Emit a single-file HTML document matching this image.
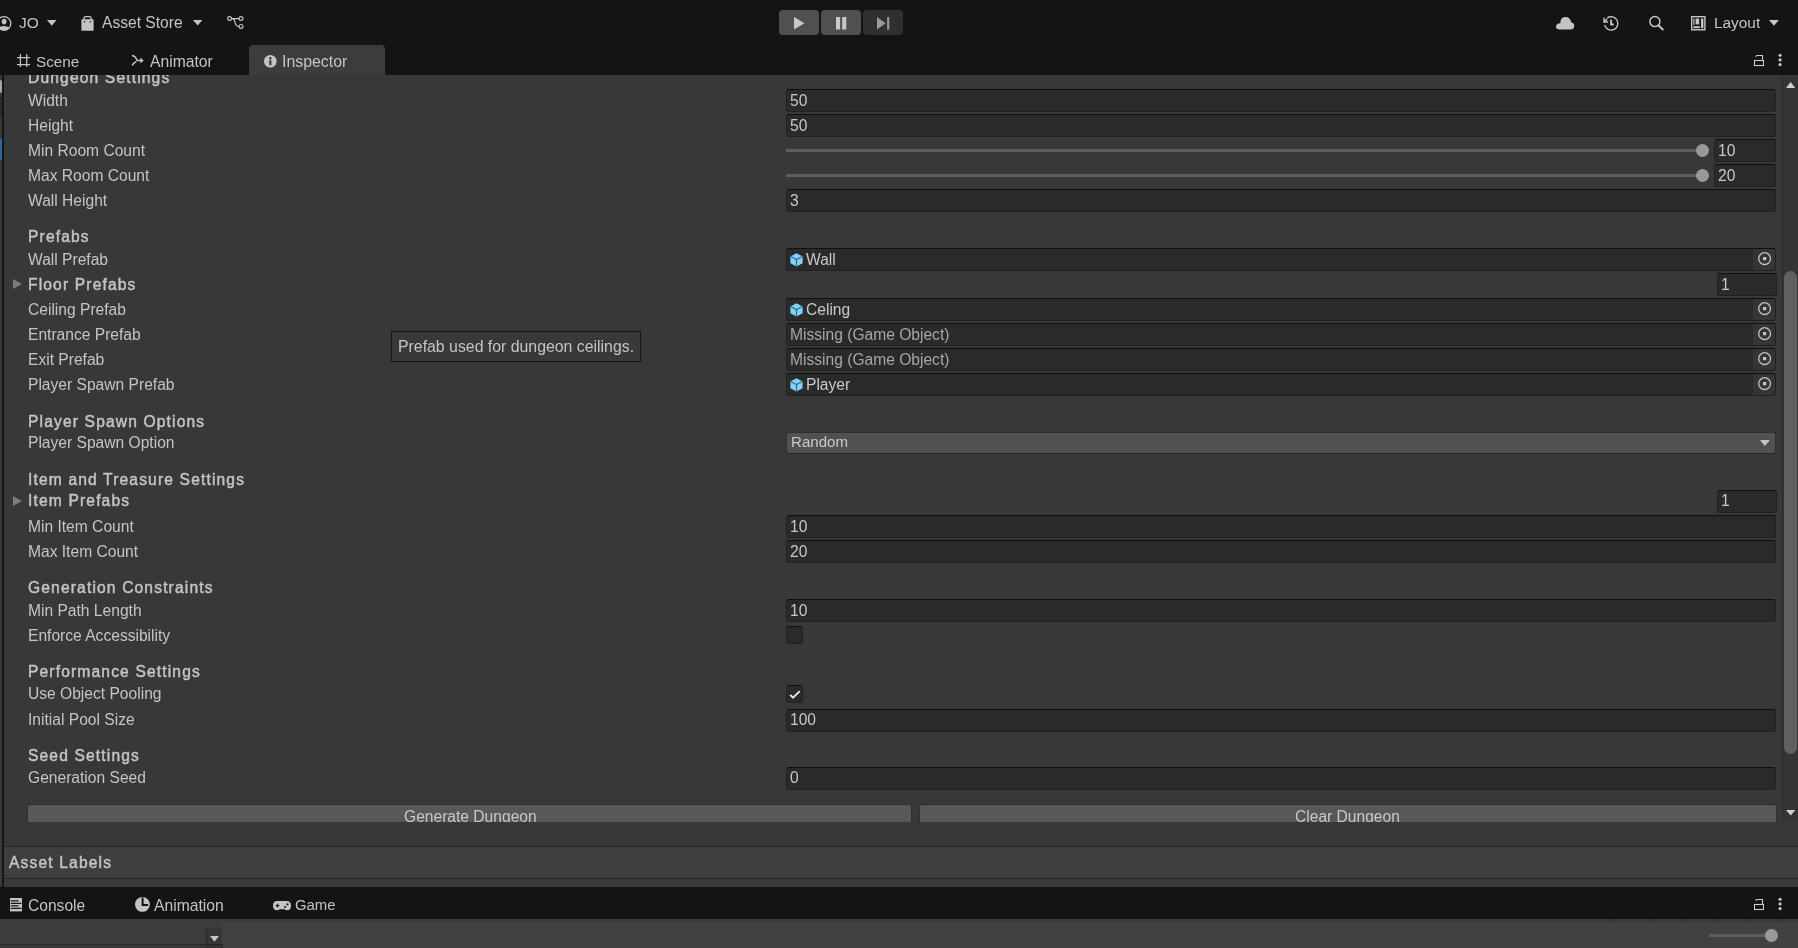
<!DOCTYPE html><html><head><meta charset="utf-8"><style>
*{margin:0;padding:0;box-sizing:border-box}
html,body{width:1798px;height:948px;overflow:hidden;background:#383838}
body{position:relative;font-family:"Liberation Sans",sans-serif}
.t{position:absolute;white-space:nowrap;will-change:transform}
.b{position:absolute}
svg{position:absolute;overflow:visible}
.fld{position:absolute;background:#2a2a2a;border:1px solid #212121;border-top-color:#0f0f0f;border-radius:3px}
</style></head><body><div class="b" style="left:0px;top:0px;width:1798px;height:75px;background:#141414"></div>
<div class="b" style="left:0px;top:75px;width:2px;height:812px;background:#393939"></div>
<div class="b" style="left:0px;top:80.3px;width:2px;height:12.7px;background:#a6a6a6;border-radius:0 2px 2px 0"></div>
<div class="b" style="left:0px;top:97px;width:2px;height:2px;background:#1e1e1e"></div>
<div class="b" style="left:0px;top:99px;width:2px;height:18.6px;background:#2a2a2a"></div>
<div class="b" style="left:0px;top:138.7px;width:2px;height:21.8px;background:#2f6699"></div>
<div class="b" style="left:2px;top:75px;width:2px;height:812px;background:#161616"></div>
<div class="b" style="left:4px;top:75px;width:1794px;height:772px;background:#383838"></div>
<svg style="left:-4px;top:15.5px" width="15" height="15" viewBox="0 0 15 15"><circle cx="8" cy="7.4" r="6.8" fill="none" stroke="#c4c4c4" stroke-width="1.3"/><ellipse cx="8.1" cy="5.6" rx="2.4" ry="2.8" fill="#c4c4c4"/><path d="M2.4 11.6Q8 8.6 13.6 11.6A6.8 6.8 0 0 1 2.4 11.6Z" fill="#c4c4c4"/></svg>
<div class="t" style="left:19.3px;top:14.88px;font-size:15.5px;line-height:15.5px;color:#c4c4c4;">JO</div>
<svg style="left:46.5px;top:19.5px" width="10" height="6" viewBox="0 0 10 6"><path d="M0 0H9.5L4.75 5.8Z" fill="#c4c4c4"/></svg>
<svg style="left:80.5px;top:15.5px" width="13" height="15" viewBox="0 0 13 15"><rect x="0.4" y="3.3" width="12.2" height="11.5" rx="0.6" fill="#c4c4c4"/><path d="M3.1 3.6V2.1Q3.1 0.6 4.6 0.6H8.5Q10 0.6 10 2.1V3.6" fill="none" stroke="#c4c4c4" stroke-width="1.4"/><circle cx="3.7" cy="5.7" r="0.75" fill="#141414"/><circle cx="9.3" cy="5.7" r="0.75" fill="#141414"/></svg>
<div class="t" style="left:102.3px;top:14.79px;font-size:15.6px;line-height:15.6px;color:#c4c4c4;">Asset Store</div>
<svg style="left:192.8px;top:19.7px" width="10" height="6" viewBox="0 0 10 6"><path d="M0 0H9.4L4.7 5.6Z" fill="#c4c4c4"/></svg>
<svg style="left:227px;top:15.5px" width="17" height="14" viewBox="0 0 17 14"><circle cx="2.6" cy="2.6" r="1.9" fill="none" stroke="#c4c4c4" stroke-width="1.2"/><circle cx="14" cy="2.6" r="1.9" fill="none" stroke="#c4c4c4" stroke-width="1.2"/><circle cx="14" cy="10.4" r="1.9" fill="none" stroke="#c4c4c4" stroke-width="1.2"/><path d="M4.5 2.6H12.1M4.5 2.6Q7.5 2.6 8 6 Q8.5 10.4 12.1 10.4" fill="none" stroke="#c4c4c4" stroke-width="1.2"/></svg>
<div class="b" style="left:779px;top:10px;width:40px;height:25px;background:#505050;border-radius:4px"></div>
<div class="b" style="left:821px;top:10px;width:40px;height:25px;background:#505050;border-radius:4px"></div>
<div class="b" style="left:863px;top:10px;width:40px;height:25px;background:#303030;border-radius:4px"></div>
<svg style="left:793.8px;top:16.7px" width="11" height="13" viewBox="0 0 11 13"><path d="M0 0L10.5 6.3L0 12.6Z" fill="#c8c8c8"/></svg>
<svg style="left:835.8px;top:16.7px" width="11" height="13" viewBox="0 0 11 13"><rect x="0" y="0" width="4.1" height="12.6" rx="0.6" fill="#c8c8c8"/><rect x="6.2" y="0" width="4.1" height="12.6" rx="0.6" fill="#c8c8c8"/></svg>
<svg style="left:876.7px;top:16.7px" width="13" height="13" viewBox="0 0 13 13"><path d="M0 0L8.7 6.3L0 12.6Z" fill="#9a9a9a"/><rect x="10.1" y="0" width="2.2" height="12.6" fill="#9a9a9a"/></svg>
<svg style="left:1555.8px;top:16.7px" width="19" height="13" viewBox="0 0 19 13"><path d="M3.6 12.4H14.6Q18.2 12.4 18.2 9Q18.2 5.8 15.2 5.6Q14.4 0 9.4 0Q5.4 0 4.4 4.4Q4.6 5.6 4.2 6.2Q0 6.6 0 9.4Q0 12.4 3.6 12.4Z" fill="#c4c4c4"/></svg>
<svg style="left:1603px;top:15.5px" width="17" height="16" viewBox="0 0 17 16"><path d="M4.26 1.91A6.7 6.7 0 1 1 1.63 9.13" fill="none" stroke="#c4c4c4" stroke-width="1.4"/><path d="M1 1.6V6H5.1M1 6L4.3 2.7" fill="none" stroke="#c4c4c4" stroke-width="1.4"/><path d="M8.1 3.8V8.5H10.7" fill="none" stroke="#c4c4c4" stroke-width="1.9"/></svg>
<svg style="left:1649.3px;top:15.8px" width="16" height="15" viewBox="0 0 16 15"><circle cx="5.9" cy="5.6" r="5" fill="none" stroke="#c4c4c4" stroke-width="1.5"/><path d="M9.4 9.3L14.3 14" stroke="#c4c4c4" stroke-width="1.9"/></svg>
<svg style="left:1690.6px;top:15.8px" width="15" height="15" viewBox="0 0 15 15"><rect x="0.7" y="0.7" width="13.2" height="13.1" fill="none" stroke="#c4c4c4" stroke-width="1.4"/><rect x="2.3" y="2.6" width="1.2" height="6.3" fill="#c4c4c4"/><rect x="4.6" y="2.6" width="3.6" height="5.8" fill="#c4c4c4"/><rect x="10" y="2.6" width="2.4" height="9.6" fill="#c4c4c4"/><rect x="2.3" y="10.2" width="6.6" height="2" fill="#c4c4c4"/></svg>
<div class="t" style="left:1714px;top:14.76px;font-size:15.4px;line-height:15.4px;color:#c4c4c4;">Layout</div>
<svg style="left:1768.7px;top:20px" width="10" height="6" viewBox="0 0 10 6"><path d="M0 0H9.9L4.95 5.8Z" fill="#c4c4c4"/></svg>
<div class="b" style="left:249px;top:45px;width:136px;height:30px;background:#3c3c3c;border-radius:4px 4px 0 0"></div>
<svg style="left:17px;top:53.8px" width="13" height="13" viewBox="0 0 13 13"><path d="M3.4 0V13M9.7 0V13M0 3.5H13M0 10.5H13" stroke="#c4c4c4" stroke-width="1.25"/></svg>
<div class="t" style="left:36.3px;top:54.05px;font-size:15.3px;line-height:15.3px;color:#c4c4c4;">Scene</div>
<svg style="left:131.4px;top:55px" width="14" height="12" viewBox="0 0 14 12"><path d="M1 0.6Q4.6 1 6 5.5H10M1.2 10.6Q2.2 8 5.2 6.6" fill="none" stroke="#c4c4c4" stroke-width="1.5"/><path d="M9.4 2.4L12.6 5.5L9.4 8.6Z" fill="#c4c4c4"/></svg>
<div class="t" style="left:149.6px;top:53.71px;font-size:15.7px;line-height:15.7px;color:#c4c4c4;">Animator</div>
<svg style="left:263.5px;top:54.6px" width="13" height="13" viewBox="0 0 13 13"><circle cx="6.3" cy="6.3" r="6.3" fill="#c4c4c4"/><rect x="5.2" y="5.2" width="2.2" height="5" fill="#3c3c3c"/><circle cx="6.3" cy="3.2" r="1.2" fill="#3c3c3c"/></svg>
<div class="t" style="left:282.3px;top:53.54px;font-size:15.9px;line-height:15.9px;color:#c4c4c4;">Inspector</div>
<svg style="left:1754px;top:54px" width="11" height="13" viewBox="0 0 11 13"><rect x="0.5" y="6.5" width="9" height="5" fill="none" stroke="#cacaca" stroke-width="1.1"/><path d="M1.6 2.6L2.7 1.5H8.5V6" fill="none" stroke="#cacaca" stroke-width="1.1"/></svg>
<svg style="left:1777.8px;top:54px" width="5" height="13" viewBox="0 0 5 13"><circle cx="2.1" cy="1.3" r="1.55" fill="#cacaca"/><circle cx="2.1" cy="5.9" r="1.55" fill="#cacaca"/><circle cx="2.1" cy="10.6" r="1.55" fill="#cacaca"/></svg>
<div class="b" style="left:0;top:75px;width:1782px;height:747px;overflow:hidden"><div class="b" style="left:0;top:-75px;width:1798px;height:948px">
<div class="t" style="left:28.3px;top:70.29px;font-size:15.6px;line-height:15.6px;color:#c4c4c4;letter-spacing:1.15px;-webkit-text-stroke:0.45px #c4c4c4;">Dungeon Settings</div>
<div class="t" style="left:28.3px;top:92.79px;font-size:15.6px;line-height:15.6px;color:#c4c4c4;">Width</div>
<div class="fld" style="left:786px;top:89px;width:990px;height:23px"></div>
<div class="t" style="left:790.0px;top:92.79px;font-size:15.6px;line-height:15.6px;color:#c8c8c8;">50</div>
<div class="t" style="left:28.3px;top:117.79px;font-size:15.6px;line-height:15.6px;color:#c4c4c4;">Height</div>
<div class="fld" style="left:786px;top:114px;width:990px;height:23px"></div>
<div class="t" style="left:790.0px;top:117.79px;font-size:15.6px;line-height:15.6px;color:#c8c8c8;">50</div>
<div class="t" style="left:28.3px;top:142.79px;font-size:15.6px;line-height:15.6px;color:#c4c4c4;">Min Room Count</div>
<div class="b" style="left:786px;top:149px;width:916px;height:3px;background:#5e5e5e"></div>
<div class="b" style="left:1695.6px;top:143.6px;width:13.2px;height:13.2px;background:#999999;border-radius:50%"></div>
<div class="fld" style="left:1714px;top:139px;width:62px;height:23px"></div>
<div class="t" style="left:1717.6px;top:142.79px;font-size:15.6px;line-height:15.6px;color:#c8c8c8;">10</div>
<div class="t" style="left:28.3px;top:167.79px;font-size:15.6px;line-height:15.6px;color:#c4c4c4;">Max Room Count</div>
<div class="b" style="left:786px;top:174px;width:916px;height:3px;background:#5e5e5e"></div>
<div class="b" style="left:1695.6px;top:168.6px;width:13.2px;height:13.2px;background:#999999;border-radius:50%"></div>
<div class="fld" style="left:1714px;top:164px;width:62px;height:23px"></div>
<div class="t" style="left:1717.6px;top:167.79px;font-size:15.6px;line-height:15.6px;color:#c8c8c8;">20</div>
<div class="t" style="left:28.3px;top:192.79px;font-size:15.6px;line-height:15.6px;color:#c4c4c4;">Wall Height</div>
<div class="fld" style="left:786px;top:189px;width:990px;height:23px"></div>
<div class="t" style="left:790.0px;top:192.79px;font-size:15.6px;line-height:15.6px;color:#c8c8c8;">3</div>
<div class="t" style="left:28.3px;top:228.79px;font-size:15.6px;line-height:15.6px;color:#c4c4c4;letter-spacing:1.15px;-webkit-text-stroke:0.45px #c4c4c4;">Prefabs</div>
<div class="t" style="left:28.3px;top:251.79px;font-size:15.6px;line-height:15.6px;color:#c4c4c4;">Wall Prefab</div>
<div class="fld" style="left:786px;top:248px;width:990px;height:23px"></div>
<div class="b" style="left:1753px;top:249px;width:22px;height:21px;background:#353535;border-radius:0 2px 2px 0"></div>
<svg style="left:1757.9px;top:251.7px" width="14" height="14" viewBox="0 0 14 14"><circle cx="6.6" cy="6.6" r="5.9" fill="none" stroke="#c4c4c4" stroke-width="1.3"/><rect x="5" y="5" width="3.2" height="3.2" fill="#c4c4c4"/></svg>
<svg style="left:790.3px;top:252.7px" width="13" height="14" viewBox="0 0 13 14"><path d="M6.5 0.2L12.6 3.4V10.2L6.5 13.4L0.4 10.2V3.4Z" fill="#7fd4fb"/><path d="M0.6 3.5L6.5 6.6L12.4 3.5M6.5 6.6V13.3" fill="none" stroke="#3a6b86" stroke-width="1.3"/></svg>
<div class="t" style="left:806px;top:251.79px;font-size:15.6px;line-height:15.6px;color:#c8c8c8;">Wall</div>
<svg style="left:13px;top:279px" width="10" height="10" viewBox="0 0 10 10"><path d="M0 0L9 5L0 10Z" fill="#7d7d7d"/></svg>
<div class="t" style="left:28.3px;top:276.79px;font-size:15.6px;line-height:15.6px;color:#c4c4c4;letter-spacing:1.15px;-webkit-text-stroke:0.45px #c4c4c4;">Floor Prefabs</div>
<div class="fld" style="left:1717px;top:273px;width:60px;height:23px"></div>
<div class="t" style="left:1721px;top:276.79px;font-size:15.6px;line-height:15.6px;color:#c8c8c8;">1</div>
<div class="t" style="left:28.3px;top:301.79px;font-size:15.6px;line-height:15.6px;color:#c4c4c4;">Ceiling Prefab</div>
<div class="fld" style="left:786px;top:298px;width:990px;height:23px"></div>
<div class="b" style="left:1753px;top:299px;width:22px;height:21px;background:#353535;border-radius:0 2px 2px 0"></div>
<svg style="left:1757.9px;top:301.7px" width="14" height="14" viewBox="0 0 14 14"><circle cx="6.6" cy="6.6" r="5.9" fill="none" stroke="#c4c4c4" stroke-width="1.3"/><rect x="5" y="5" width="3.2" height="3.2" fill="#c4c4c4"/></svg>
<svg style="left:790.3px;top:302.7px" width="13" height="14" viewBox="0 0 13 14"><path d="M6.5 0.2L12.6 3.4V10.2L6.5 13.4L0.4 10.2V3.4Z" fill="#7fd4fb"/><path d="M0.6 3.5L6.5 6.6L12.4 3.5M6.5 6.6V13.3" fill="none" stroke="#3a6b86" stroke-width="1.3"/></svg>
<div class="t" style="left:806px;top:301.79px;font-size:15.6px;line-height:15.6px;color:#c8c8c8;">Celing</div>
<div class="t" style="left:28.3px;top:326.79px;font-size:15.6px;line-height:15.6px;color:#c4c4c4;">Entrance Prefab</div>
<div class="fld" style="left:786px;top:323px;width:990px;height:23px"></div>
<div class="b" style="left:1753px;top:324px;width:22px;height:21px;background:#353535;border-radius:0 2px 2px 0"></div>
<svg style="left:1757.9px;top:326.7px" width="14" height="14" viewBox="0 0 14 14"><circle cx="6.6" cy="6.6" r="5.9" fill="none" stroke="#c4c4c4" stroke-width="1.3"/><rect x="5" y="5" width="3.2" height="3.2" fill="#c4c4c4"/></svg>
<div class="t" style="left:790.2px;top:326.79px;font-size:15.6px;line-height:15.6px;color:#a6a6a6;">Missing (Game Object)</div>
<div class="t" style="left:28.3px;top:351.79px;font-size:15.6px;line-height:15.6px;color:#c4c4c4;">Exit Prefab</div>
<div class="fld" style="left:786px;top:348px;width:990px;height:23px"></div>
<div class="b" style="left:1753px;top:349px;width:22px;height:21px;background:#353535;border-radius:0 2px 2px 0"></div>
<svg style="left:1757.9px;top:351.7px" width="14" height="14" viewBox="0 0 14 14"><circle cx="6.6" cy="6.6" r="5.9" fill="none" stroke="#c4c4c4" stroke-width="1.3"/><rect x="5" y="5" width="3.2" height="3.2" fill="#c4c4c4"/></svg>
<div class="t" style="left:790.2px;top:351.79px;font-size:15.6px;line-height:15.6px;color:#a6a6a6;">Missing (Game Object)</div>
<div class="t" style="left:28.3px;top:376.79px;font-size:15.6px;line-height:15.6px;color:#c4c4c4;">Player Spawn Prefab</div>
<div class="fld" style="left:786px;top:373px;width:990px;height:23px"></div>
<div class="b" style="left:1753px;top:374px;width:22px;height:21px;background:#353535;border-radius:0 2px 2px 0"></div>
<svg style="left:1757.9px;top:376.7px" width="14" height="14" viewBox="0 0 14 14"><circle cx="6.6" cy="6.6" r="5.9" fill="none" stroke="#c4c4c4" stroke-width="1.3"/><rect x="5" y="5" width="3.2" height="3.2" fill="#c4c4c4"/></svg>
<svg style="left:790.3px;top:377.7px" width="13" height="14" viewBox="0 0 13 14"><path d="M6.5 0.2L12.6 3.4V10.2L6.5 13.4L0.4 10.2V3.4Z" fill="#7fd4fb"/><path d="M0.6 3.5L6.5 6.6L12.4 3.5M6.5 6.6V13.3" fill="none" stroke="#3a6b86" stroke-width="1.3"/></svg>
<div class="t" style="left:806px;top:376.79px;font-size:15.6px;line-height:15.6px;color:#c8c8c8;">Player</div>
<div class="t" style="left:28.3px;top:413.79px;font-size:15.6px;line-height:15.6px;color:#c4c4c4;letter-spacing:1.15px;-webkit-text-stroke:0.45px #c4c4c4;">Player Spawn Options</div>
<div class="t" style="left:28.3px;top:434.79px;font-size:15.6px;line-height:15.6px;color:#c4c4c4;">Player Spawn Option</div>
<div class="b" style="left:786px;top:431.5px;width:990px;height:22.5px;background:#515151;border-radius:3px;border:1px solid #303030;border-bottom-color:#262626"></div>
<div class="t" style="left:791.4px;top:434.42px;font-size:15.1px;line-height:15.1px;color:#c8c8c8;">Random</div>
<svg style="left:1759.5px;top:439.8px" width="10" height="6" viewBox="0 0 10 6"><path d="M0 0H9.8L4.9 5.9Z" fill="#c4c4c4"/></svg>
<div class="t" style="left:28.3px;top:472.09px;font-size:15.6px;line-height:15.6px;color:#c4c4c4;letter-spacing:1.15px;-webkit-text-stroke:0.45px #c4c4c4;">Item and Treasure Settings</div>
<svg style="left:13px;top:495.6px" width="10" height="10" viewBox="0 0 10 10"><path d="M0 0L9 5L0 10Z" fill="#7d7d7d"/></svg>
<div class="t" style="left:28.3px;top:493.39px;font-size:15.6px;line-height:15.6px;color:#c4c4c4;letter-spacing:1.15px;-webkit-text-stroke:0.45px #c4c4c4;">Item Prefabs</div>
<div class="fld" style="left:1717px;top:490px;width:60px;height:23px"></div>
<div class="t" style="left:1721px;top:493.39px;font-size:15.6px;line-height:15.6px;color:#c8c8c8;">1</div>
<div class="t" style="left:28.3px;top:518.79px;font-size:15.6px;line-height:15.6px;color:#c4c4c4;">Min Item Count</div>
<div class="fld" style="left:786px;top:515px;width:990px;height:23px"></div>
<div class="t" style="left:790px;top:518.79px;font-size:15.6px;line-height:15.6px;color:#c8c8c8;">10</div>
<div class="t" style="left:28.3px;top:543.79px;font-size:15.6px;line-height:15.6px;color:#c4c4c4;">Max Item Count</div>
<div class="fld" style="left:786px;top:540px;width:990px;height:23px"></div>
<div class="t" style="left:790px;top:543.79px;font-size:15.6px;line-height:15.6px;color:#c8c8c8;">20</div>
<div class="t" style="left:28.3px;top:579.89px;font-size:15.6px;line-height:15.6px;color:#c4c4c4;letter-spacing:1.15px;-webkit-text-stroke:0.45px #c4c4c4;">Generation Constraints</div>
<div class="t" style="left:28.3px;top:602.79px;font-size:15.6px;line-height:15.6px;color:#c4c4c4;">Min Path Length</div>
<div class="fld" style="left:786px;top:599px;width:990px;height:23px"></div>
<div class="t" style="left:790px;top:602.79px;font-size:15.6px;line-height:15.6px;color:#c8c8c8;">10</div>
<div class="t" style="left:28.3px;top:627.79px;font-size:15.6px;line-height:15.6px;color:#c4c4c4;">Enforce Accessibility</div>
<div class="fld" style="left:786px;top:626px;width:17px;height:17.5px"></div>
<div class="t" style="left:28.3px;top:664.09px;font-size:15.6px;line-height:15.6px;color:#c4c4c4;letter-spacing:1.15px;-webkit-text-stroke:0.45px #c4c4c4;">Performance Settings</div>
<div class="t" style="left:28.3px;top:686.29px;font-size:15.6px;line-height:15.6px;color:#c4c4c4;">Use Object Pooling</div>
<div class="fld" style="left:786px;top:685px;width:17px;height:17.5px"></div>
<svg style="left:788.5px;top:690px" width="12" height="10" viewBox="0 0 12 10"><path d="M1.2 4.9L4 7.7L10.8 1.1" fill="none" stroke="#e6e6e6" stroke-width="2"/></svg>
<div class="t" style="left:28.3px;top:711.59px;font-size:15.6px;line-height:15.6px;color:#c4c4c4;">Initial Pool Size</div>
<div class="fld" style="left:786px;top:709px;width:990px;height:22.5px"></div>
<div class="t" style="left:790px;top:711.79px;font-size:15.6px;line-height:15.6px;color:#c8c8c8;">100</div>
<div class="t" style="left:28.3px;top:747.79px;font-size:15.6px;line-height:15.6px;color:#c4c4c4;letter-spacing:1.15px;-webkit-text-stroke:0.45px #c4c4c4;">Seed Settings</div>
<div class="t" style="left:28.3px;top:769.79px;font-size:15.6px;line-height:15.6px;color:#c4c4c4;">Generation Seed</div>
<div class="fld" style="left:786px;top:767px;width:990px;height:22.5px"></div>
<div class="t" style="left:790px;top:770.29px;font-size:15.6px;line-height:15.6px;color:#c8c8c8;">0</div>
<div class="b" style="left:27px;top:804px;width:885px;height:23px;background:#585858;border:1px solid #303030;border-radius:3px"></div>
<div class="b" style="left:919px;top:804px;width:858px;height:23px;background:#585858;border:1px solid #303030;border-radius:3px"></div>
<div class="t" style="left:403.5px;top:808.79px;font-size:15.6px;line-height:15.6px;color:#c8c8c8;">Generate Dungeon</div>
<div class="t" style="left:1295px;top:808.79px;font-size:15.6px;line-height:15.6px;color:#c8c8c8;">Clear Dungeon</div>
</div></div>
<div class="b" style="left:391px;top:331px;width:250px;height:31px;background:#393939;border:1px solid #161616"></div>
<div class="t" style="left:397.6px;top:338.58px;font-size:15.85px;line-height:15.85px;color:#c4c4c4;">Prefab used for dungeon ceilings.</div>
<div class="b" style="left:1782px;top:75px;width:1px;height:747px;background:#2c2c2c"></div>
<div class="b" style="left:1783px;top:75px;width:15px;height:747px;background:#343434"></div>
<svg style="left:1786px;top:81.8px" width="10" height="6" viewBox="0 0 10 6"><path d="M4.6 0L9.2 5.9H0Z" fill="#d0d0d0"/></svg>
<div class="b" style="left:1784px;top:271px;width:13px;height:483px;background:#606060;border-radius:6.5px"></div>
<svg style="left:1786px;top:809.7px" width="10" height="6" viewBox="0 0 10 6"><path d="M0 0H9.4L4.7 5.5Z" fill="#d0d0d0"/></svg>
<div class="b" style="left:4px;top:846px;width:1794px;height:1px;background:#232323"></div>
<div class="b" style="left:4px;top:847px;width:1794px;height:31px;background:#3e3e3e"></div>
<div class="t" style="left:8.6px;top:854.79px;font-size:15.6px;line-height:15.6px;color:#c4c4c4;letter-spacing:1.15px;-webkit-text-stroke:0.45px #c4c4c4;">Asset Labels</div>
<div class="b" style="left:4px;top:878px;width:1794px;height:1px;background:#232323"></div>
<div class="b" style="left:4px;top:879px;width:1794px;height:8px;background:#3c3c3c"></div>
<div class="b" style="left:0px;top:887px;width:1798px;height:32px;background:#141414"></div>
<svg style="left:10px;top:897.6px" width="12" height="14" viewBox="0 0 12 14"><rect x="0" y="0" width="12" height="13.4" fill="#c4c4c4"/><path d="M1.2 2.9H8.1M1.2 5.4H10.9M1.2 7.9H8.1M1.2 10.4H10.9" stroke="#141414" stroke-width="1.2" stroke-linecap="round"/></svg>
<div class="t" style="left:28.4px;top:897.79px;font-size:15.6px;line-height:15.6px;color:#c4c4c4;">Console</div>
<svg style="left:134.6px;top:897.4px" width="15" height="15" viewBox="0 0 15 15"><circle cx="7.4" cy="7.45" r="7.4" fill="#c4c4c4"/><path d="M7.6 0.6V8.1H13.1" fill="none" stroke="#141414" stroke-width="2"/></svg>
<div class="t" style="left:154.2px;top:897.71px;font-size:15.7px;line-height:15.7px;color:#c4c4c4;">Animation</div>
<svg style="left:273px;top:900.9px" width="18" height="10" viewBox="0 0 18 10"><path d="M4.2 0H13.8Q18 0 18 4.6Q18 9.3 14 9.3Q12.4 9.3 11.5 8.3H6.5Q5.6 9.3 4 9.3Q0 9.3 0 4.6Q0 0 4.2 0Z" fill="#c4c4c4"/><path d="M2.6 4.6H6.4M4.5 2.7V6.5" stroke="#141414" stroke-width="1.1"/><circle cx="12.1" cy="6" r="1.05" fill="#141414"/><circle cx="14.5" cy="3.4" r="1.05" fill="#141414"/></svg>
<div class="t" style="left:294.5px;top:898.39px;font-size:14.9px;line-height:14.9px;color:#c4c4c4;">Game</div>
<svg style="left:1754px;top:898px" width="11" height="13" viewBox="0 0 11 13"><rect x="0.5" y="6.5" width="9" height="5" fill="none" stroke="#cacaca" stroke-width="1.1"/><path d="M1.6 2.6L2.7 1.5H8.5V6" fill="none" stroke="#cacaca" stroke-width="1.1"/></svg>
<svg style="left:1777.8px;top:898px" width="5" height="13" viewBox="0 0 5 13"><circle cx="2.1" cy="1.3" r="1.55" fill="#cacaca"/><circle cx="2.1" cy="5.9" r="1.55" fill="#cacaca"/><circle cx="2.1" cy="10.6" r="1.55" fill="#cacaca"/></svg>
<div class="b" style="left:0px;top:919px;width:1798px;height:29px;background:#414141"></div>
<div class="b" style="left:0px;top:919px;width:222px;height:29px;background:#3c3c3c"></div>
<div class="b" style="left:206px;top:929px;width:16px;height:15px;background:#363636;border-left:1px solid #262626"></div>
<div class="b" style="left:0px;top:944px;width:222px;height:1px;background:#262626"></div>
<div class="b" style="left:0px;top:945px;width:222px;height:3px;background:#383838"></div>
<div class="b" style="left:206px;top:945px;width:16px;height:3px;background:#333333;border-left:1px solid #262626"></div>
<div class="b" style="left:222px;top:944px;width:1px;height:4px;background:#262626"></div>
<svg style="left:210px;top:935.7px" width="9" height="6" viewBox="0 0 9 6"><path d="M0 0H8.9L4.45 5.8Z" fill="#c4c4c4"/></svg>
<div class="b" style="left:222px;top:919px;width:1576px;height:3px;background:#393939"></div>
<div class="b" style="left:1614px;top:919px;width:1px;height:3px;background:#262626"></div>
<div class="b" style="left:1648px;top:919px;width:1px;height:3px;background:#262626"></div>
<div class="b" style="left:1680px;top:919px;width:1px;height:3px;background:#262626"></div>
<div class="b" style="left:1713px;top:919px;width:1px;height:3px;background:#262626"></div>
<div class="b" style="left:1745px;top:919px;width:1px;height:3px;background:#262626"></div>
<div class="b" style="left:1782px;top:919px;width:1px;height:3px;background:#262626"></div>
<div class="b" style="left:1709px;top:934px;width:57px;height:3px;background:#5e5e5e"></div>
<div class="b" style="left:1765px;top:928.8px;width:12.6px;height:13px;background:#999999;border-radius:50%"></div></body></html>
